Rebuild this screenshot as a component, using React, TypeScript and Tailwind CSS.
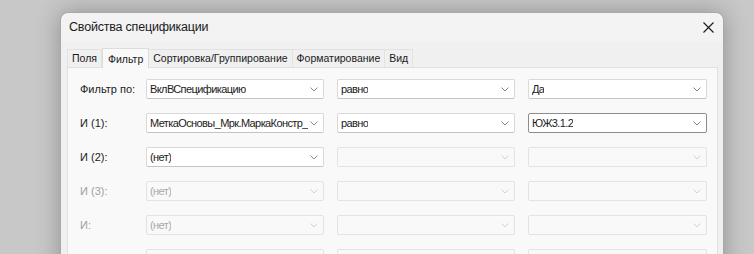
import React from 'react'

const font = { fontFamily: '"Liberation Sans", Arial, sans-serif' }

function Chevron({ disabled }: { disabled?: boolean }) {
  return (
    <svg width="8" height="5" viewBox="0 0 8 5" className="shrink-0">
      <path
        d="M0.5 0.5 L4 4 L7.5 0.5"
        fill="none"
        stroke={disabled ? '#d2d2d2' : '#8a8a8a'}
        strokeWidth="1"
      />
    </svg>
  )
}

function Combo({
  value,
  width,
  disabled,
  focused,
}: {
  value?: string
  width: string
  disabled?: boolean
  focused?: boolean
}) {
  const border = focused
    ? 'border-[#8c8c8c]'
    : disabled
      ? 'border-[#e3e3e3]'
      : 'border-[#d9d9d9] border-b-[#c4c4c4]'
  return (
    <div
      className={`${width} h-[20px] flex items-center justify-between pl-[3px] pr-[5px] border rounded-[2px] ${border} ${
        disabled ? 'bg-[#f9f9f9] text-[#a8a8a8]' : 'bg-white text-[#1b1b1b]'
      }`}
    >
      <span className="overflow-hidden whitespace-nowrap text-[11px] tracking-[-0.6px] leading-none mr-[2px]">
        {value}
      </span>
      <Chevron disabled={disabled} />
    </div>
  )
}

const rows = [
  { label: 'Фильтр по:', a: 'ВклВСпецификацию', b: 'равно', c: 'Да', state: 'on' },
  { label: 'И (1):', a: 'МеткаОсновы_Мрк.МаркаКонстр_', b: 'равно', c: 'ЮЖ3.1.2', state: 'focus' },
  { label: 'И (2):', a: '(нет)', state: 'half' },
  { label: 'И (3):', a: '(нет)', state: 'off' },
  { label: 'И:', a: '(нет)', state: 'off' },
  { label: '', a: '(нет)', state: 'off' },
]

const tabs = ['Поля', 'Фильтр', 'Сортировка/Группирование', 'Форматирование', 'Вид']

export default function App() {
  return (
    <div className="w-[754px] h-[254px] overflow-hidden bg-[#c8c8c8] pt-[12px] pl-[60px]" style={font}>
      <div className="w-[664px] h-[300px] rounded-t-[8px] bg-[#f3f3f3] border border-[#a9a9a9] shadow-[0_0_24px_rgba(0,0,0,0.28)]">
        {/* title bar */}
        <div className="h-[29px] flex items-center justify-between pl-[8px] pr-[9px]">
          <span className="text-[12.5px] tracking-[-0.2px] text-[#1a1a1a]">Свойства спецификации</span>
          <svg width="11" height="11" viewBox="0 0 11 11">
            <path d="M0.5 0.5 L10.5 10.5 M10.5 0.5 L0.5 10.5" stroke="#1a1a1a" strokeWidth="1.1" />
          </svg>
        </div>

        <div className="bg-[#f0f0f0] pt-[5px] px-[6px]">
          {/* tabs */}
          <div className="flex items-end h-[20px] text-[10.5px] text-[#1a1a1a]">
            {tabs.map((t) =>
              t === 'Фильтр' ? (
                <div
                  key={t}
                  className="h-[20px] px-[5px] pt-[3px] bg-[#f9f9f9] border border-b-0 border-[#dcdcdc] -mb-px relative z-10"
                >
                  {t}
                </div>
              ) : (
                <div
                  key={t}
                  className="h-[18px] px-[4px] flex items-center bg-[#f0f0f0] border border-b-0 border-[#e2e2e2] -ml-px first:ml-0"
                >
                  {t}
                </div>
              ),
            )}
          </div>

          {/* panel */}
          <div className="w-[651px] h-[220px] bg-[#f9f9f9] border border-[#e0e0e0] pt-[11px] pl-[12px] flex flex-col gap-[14px]">
            {rows.map((r, i) => (
              <div key={i} className="flex items-center">
                <span
                  className={`w-[66px] text-[11px] ${
                    r.state === 'off' ? 'text-[#a0a0a0]' : 'text-[#1b1b1b]'
                  }`}
                >
                  {r.label}
                </span>
                <Combo width="w-[178px]" value={r.a} disabled={r.state === 'off'} />
                <div className="w-[13px]" />
                <Combo width="w-[178px]" value={r.b} disabled={!r.b} />
                <div className="w-[13px]" />
                <Combo width="w-[179px]" value={r.c} disabled={!r.c} focused={r.state === 'focus'} />
              </div>
            ))}
          </div>
        </div>
      </div>
    </div>
  )
}
